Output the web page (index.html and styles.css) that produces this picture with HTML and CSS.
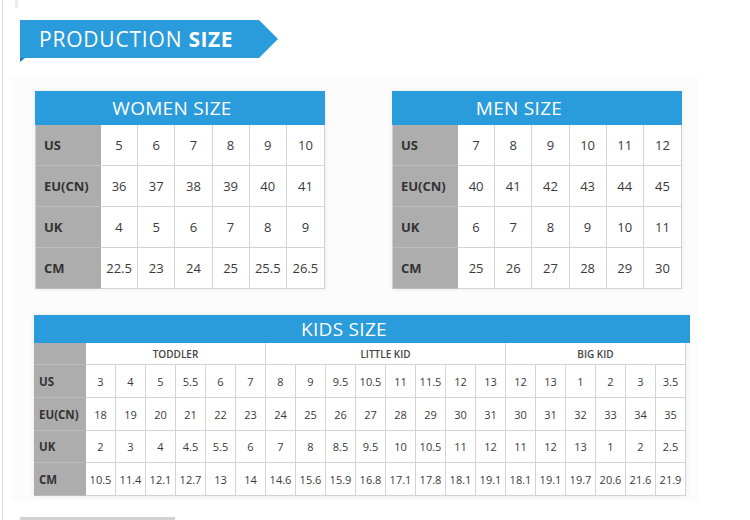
FILE: index.html
```html
<!DOCTYPE html>
<html>
<head>
<meta charset="utf-8">
<link rel="stylesheet" href="styles.css">
</head>
<body>
<div class="page">
  <div class="banner">
    <div class="banner-body">PRODUCTION <b>SIZE</b></div>
    <div class="banner-tip"></div>
  </div>

  <div class="panel">
    <div class="adult-row">
      <div class="card card-women">
        <div class="card-head head-women">WOMEN SIZE</div>
        <div class="grid adult-grid">
          <div class="lab">US</div><div>5</div><div>6</div><div>7</div><div>8</div><div>9</div><div>10</div>
          <div class="lab">EU(CN)</div><div>36</div><div>37</div><div>38</div><div>39</div><div>40</div><div>41</div>
          <div class="lab">UK</div><div>4</div><div>5</div><div>6</div><div>7</div><div>8</div><div>9</div>
          <div class="lab">CM</div><div>22.5</div><div>23</div><div>24</div><div>25</div><div>25.5</div><div>26.5</div>
        </div>
      </div>
      <div class="card card-men">
        <div class="card-head head-men">MEN SIZE</div>
        <div class="grid adult-grid">
          <div class="lab">US</div><div>7</div><div>8</div><div>9</div><div>10</div><div>11</div><div>12</div>
          <div class="lab">EU(CN)</div><div>40</div><div>41</div><div>42</div><div>43</div><div>44</div><div>45</div>
          <div class="lab">UK</div><div>6</div><div>7</div><div>8</div><div>9</div><div>10</div><div>11</div>
          <div class="lab">CM</div><div>25</div><div>26</div><div>27</div><div>28</div><div>29</div><div>30</div>
        </div>
      </div>
    </div>

    <div class="card card-kids">
      <div class="card-head head-kids">KIDS SIZE</div>
      <div class="grid kids-grid">
        <div class="lab"></div><div class="grp g6">TODDLER</div><div class="grp g8">LITTLE KID</div><div class="grp g6">BIG KID</div>
        <div class="lab">US</div><div>3</div><div>4</div><div>5</div><div>5.5</div><div>6</div><div>7</div><div>8</div><div>9</div><div>9.5</div><div>10.5</div><div>11</div><div>11.5</div><div>12</div><div>13</div><div>12</div><div>13</div><div>1</div><div>2</div><div>3</div><div>3.5</div>
        <div class="lab">EU(CN)</div><div>18</div><div>19</div><div>20</div><div>21</div><div>22</div><div>23</div><div>24</div><div>25</div><div>26</div><div>27</div><div>28</div><div>29</div><div>30</div><div>31</div><div>30</div><div>31</div><div>32</div><div>33</div><div>34</div><div>35</div>
        <div class="lab">UK</div><div>2</div><div>3</div><div>4</div><div>4.5</div><div>5.5</div><div>6</div><div>7</div><div>8</div><div>8.5</div><div>9.5</div><div>10</div><div>10.5</div><div>11</div><div>12</div><div>11</div><div>12</div><div>13</div><div>1</div><div>2</div><div>2.5</div>
        <div class="lab">CM</div><div>10.5</div><div>11.4</div><div>12.1</div><div>12.7</div><div>13</div><div>14</div><div>14.6</div><div>15.6</div><div>15.9</div><div>16.8</div><div>17.1</div><div>17.8</div><div>18.1</div><div>19.1</div><div>18.1</div><div>19.1</div><div>19.7</div><div>20.6</div><div>21.6</div><div>21.9</div>
      </div>
    </div>
  </div>

  <div class="bottom-bar"></div>
</div>
</body>
</html>
```

FILE: styles.css
```css
* { box-sizing: border-box; }
html, body { margin: 0; padding: 0; background: #fff; }
body { font-family: "Open Sans", "Liberation Sans", sans-serif; color: #333; overflow: hidden; }

.page {
  position: relative;
  margin-left: 2px;
  border-left: 1px solid #dedede;
  width: 748px;
  height: 520px;
  padding-top: 20px;
}
.page::before {
  content: "";
  position: absolute;
  left: 12px;
  top: 0;
  width: 3px;
  height: 8px;
  background: #ececec;
}

.banner {
  position: relative;
  display: flex;
  margin-left: 17px;
  height: 38px;
}
.banner::before {
  content: "";
  position: absolute;
  left: 0;
  top: 38px;
  border-top: 4px solid #1f7fb6;
  border-right: 5px solid transparent;
}
.banner-body {
  width: 239px;
  height: 38px;
  background: #2a9bdb;
  color: #fff;
  font-size: 21px;
  line-height: 38px;
  padding-left: 19px;
  letter-spacing: 0.8px;
  white-space: nowrap;
}
.banner-body b { font-weight: 700; letter-spacing: 0.5px; }
.banner-tip {
  width: 0; height: 0;
  border-left: 19px solid #2a9bdb;
  border-top: 19px solid transparent;
  border-bottom: 19px solid transparent;
}

.panel {
  margin-top: 18px;
  margin-left: 8px;
  width: 687px;
  background: #fcfcfc;
  padding: 15px 0 5px 24px;
}
.adult-row { display: flex; gap: 67px; }

.card { box-shadow: 0 0 5px rgba(0,0,0,0.08); background: #fff; }
.card-women, .card-men { width: 290px; }

.card-head {
  height: 34px;
  background: #2a9bdb;
  color: #fff;
  font-size: 19px;
  display: flex;
  align-items: center;
  justify-content: center;
  letter-spacing: 0.3px;
}
.head-women { padding-right: 16px; }
.head-men { padding-right: 36px; }

.grid {
  display: grid;
  border-left: 1px solid #cfcfcf;
  border-right: 1px solid #cfcfcf;
}
.grid > div {
  display: flex;
  align-items: center;
  justify-content: center;
  border-right: 1px solid #d4d4d4;
  border-bottom: 1px solid #d4d4d4;
  color: #3a3a3a;
  font-weight: 500;
  white-space: nowrap;
}
.grid > .lab {
  background: #adadad;
  justify-content: flex-start;
  font-weight: 700;
  color: #333;
  border-right: none;
  border-bottom-color: #bcbcbc;
}

.adult-grid {
  grid-template-columns: 65px repeat(6, 1fr);
  grid-auto-rows: 41px;
  font-size: 13px;
}
.adult-grid > .lab { padding-left: 8px; font-size: 13px; }
.adult-grid > div:nth-child(7n) { border-right: none; }

.card-kids {
  margin-top: 26px;
  margin-left: -1px;
  width: 652px;
}
.head-kids {
  width: 656px;
  height: 28px;
  padding-right: 36px;
}
.kids-grid {
  grid-template-columns: 52px repeat(20, 30px);
  grid-template-rows: 22px 33px 33px 32px 33px;
  font-size: 11px;
  border-left: none;
}
.kids-grid > .lab { padding-left: 5px; font-size: 11.5px; }
.kids-grid > .grp { font-size: 10px; color: #444; font-weight: 600; }
.g6 { grid-column: span 6; }
.g8 { grid-column: span 8; }

.bottom-bar {
  margin-top: 16px;
  margin-left: 17px;
  width: 155px;
  height: 6px;
  background: #d2d2d2;
}
```
